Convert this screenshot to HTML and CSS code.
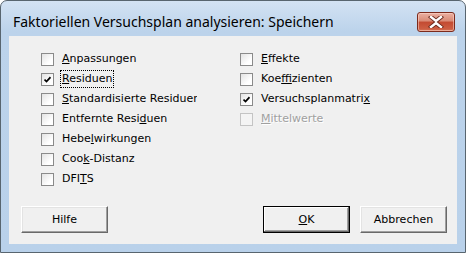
FILE: index.html
```html
<!DOCTYPE html>
<html lang="de">
<head>
    <meta charset="UTF-8">
    <title>Faktoriellen Versuchsplan analysieren: Speichern</title>
    <link rel="stylesheet" href="styles.css">
</head>
<body>

    <div class="window">
        <div class="titlebar">
            <span class="title">Faktoriellen Versuchsplan analysieren: Speichern</span>
            <span class="close">
                <svg width="16" height="12" viewBox="0 0 16 12">
                    <path d="M3 1 L8 5 L13 1 M3 11 L8 7 L13 11" stroke="#6b2a1e" stroke-width="4.2" fill="none" stroke-linecap="square"/>
                    <path d="M3 1 L8 5 L13 1 M3 11 L8 7 L13 11" stroke="#ffffff" stroke-width="2.4" fill="none" stroke-linecap="square"/>
                </svg>
            </span>
        </div>

        <div class="client">
            <div class="options">
                <div class="column col-left">
                    <div class="row"><span class="box"></span><label><u>A</u>npassungen</label></div>
                    <div class="row"><span class="box checked"></span><label class="focus"><u>R</u>esiduen</label></div>
                    <div class="row"><span class="box"></span><label><u>S</u>tandardisierte Residuen</label></div>
                    <div class="row"><span class="box"></span><label>Entfernte Resi<u>d</u>uen</label></div>
                    <div class="row"><span class="box"></span><label>Hebe<u>l</u>wirkungen</label></div>
                    <div class="row"><span class="box"></span><label>Coo<u>k</u>-Distanz</label></div>
                    <div class="row"><span class="box"></span><label>DFI<u>T</u>S</label></div>
                </div>
                <div class="column">
                    <div class="row"><span class="box"></span><label><u>E</u>ffekte</label></div>
                    <div class="row"><span class="box"></span><label>Koe<u>f</u>fizienten</label></div>
                    <div class="row"><span class="box checked"></span><label>Versuchsplanmatri<u>x</u></label></div>
                    <div class="row disabled"><span class="box"></span><label><u>M</u>ittelwerte</label></div>
                </div>
            </div>

            <div class="buttons">
                <button>Hilfe</button>
                <span class="spacer"></span>
                <button class="default"><u>O</u>K</button>
                <button>Abbrechen</button>
            </div>
        </div>
    </div>

</body>
</html>
```

FILE: styles.css
```css
body {
    margin: 0;
    background: #ffffff;
}
.window {
    width: 466px;
    height: 253px;
    box-sizing: border-box;
    border: 1px solid #58656f;
    border-radius: 7px 7px 0 0;
    background: linear-gradient(#d3e2f3, #bcd3eb 30px, #b9d1ea);
    display: flex;
    flex-direction: column;
}
.titlebar {
    height: 35px;
    flex-shrink: 0;
    display: flex;
    align-items: flex-start;
    padding: 0 10px 0 12px;
}
.title {
    font-family: "Noto Sans", sans-serif;
    font-size: 14px;
    line-height: 20px;
    color: #000000;
    padding-top: 11px;
    flex: 1;
}
.close {
    margin-top: 11px;
    width: 38px;
    height: 20px;
    box-sizing: border-box;
    border: 1px solid #7c2a1c;
    border-radius: 3px;
    background: linear-gradient(#ebb0a2, #d98a75 45%, #c34a31 50%, #cd5f43 90%, #dc8a6f);
    display: flex;
    align-items: center;
    justify-content: center;
    box-shadow: inset 0 0 0 1px rgba(255, 220, 210, 0.5);
}
.client {
    flex: 1;
    margin: 0 8px 8px 8px;
    background: #f0f0f0;
    display: flex;
    flex-direction: column;
    font-family: "DejaVu Sans", sans-serif;
    font-size: 11px;
    color: #000000;
}
.options {
    display: flex;
    padding: 13px 0 0 32px;
}
.column {
    display: flex;
    flex-direction: column;
}
.col-left {
    width: 199px;
}
.row {
    height: 20px;
    display: flex;
    align-items: center;
}
.box {
    width: 13px;
    height: 13px;
    box-sizing: border-box;
    flex-shrink: 0;
    border: 1px solid #8a8a8a;
    background: linear-gradient(135deg, #e2e2e2, #ffffff 70%);
    display: flex;
    align-items: center;
    justify-content: center;
}
.box.checked::after {
    content: "";
    width: 7px;
    height: 7px;
    background: url("data:image/svg+xml;utf8,<svg xmlns='http://www.w3.org/2000/svg' width='7' height='7'><polyline points='0.5,3.5 2.5,5.5 6.5,1.2' stroke='black' stroke-width='1.7' fill='none'/></svg>");
}
.row label {
    margin-left: 6px;
    padding: 1px 1px 2px 1px;
    border: 1px solid transparent;
    line-height: 13px;
    white-space: nowrap;
    overflow: hidden;
}
.col-left label {
    max-width: 134px;
}
.row label.focus {
    border: 1px dotted #000000;
}
.disabled .box {
    border-color: #c4c4c4;
    background: #f4f4f4;
}
.disabled label {
    color: #a0a0a0;
    text-shadow: 1px 1px 0 #ffffff;
}
.buttons {
    margin-top: auto;
    display: flex;
    gap: 10px;
    padding: 0 10px 11px 12px;
}
.spacer {
    flex: 1;
}
button {
    width: 87px;
    height: 27px;
    font-family: "DejaVu Sans", sans-serif;
    font-size: 11px;
    color: #000000;
    background: #f0f0f0;
    border: 1px solid;
    border-color: #ffffff #696969 #696969 #ffffff;
    box-shadow: inset -1px -1px 0 #a0a0a0, inset 1px 1px 0 #e3e3e3;
    padding: 0;
}
button.default {
    border: 1px solid #000000;
    box-shadow: inset -1px -1px 0 #696969, inset 1px 1px 0 #ffffff, inset -2px -2px 0 #a0a0a0;
}
```
